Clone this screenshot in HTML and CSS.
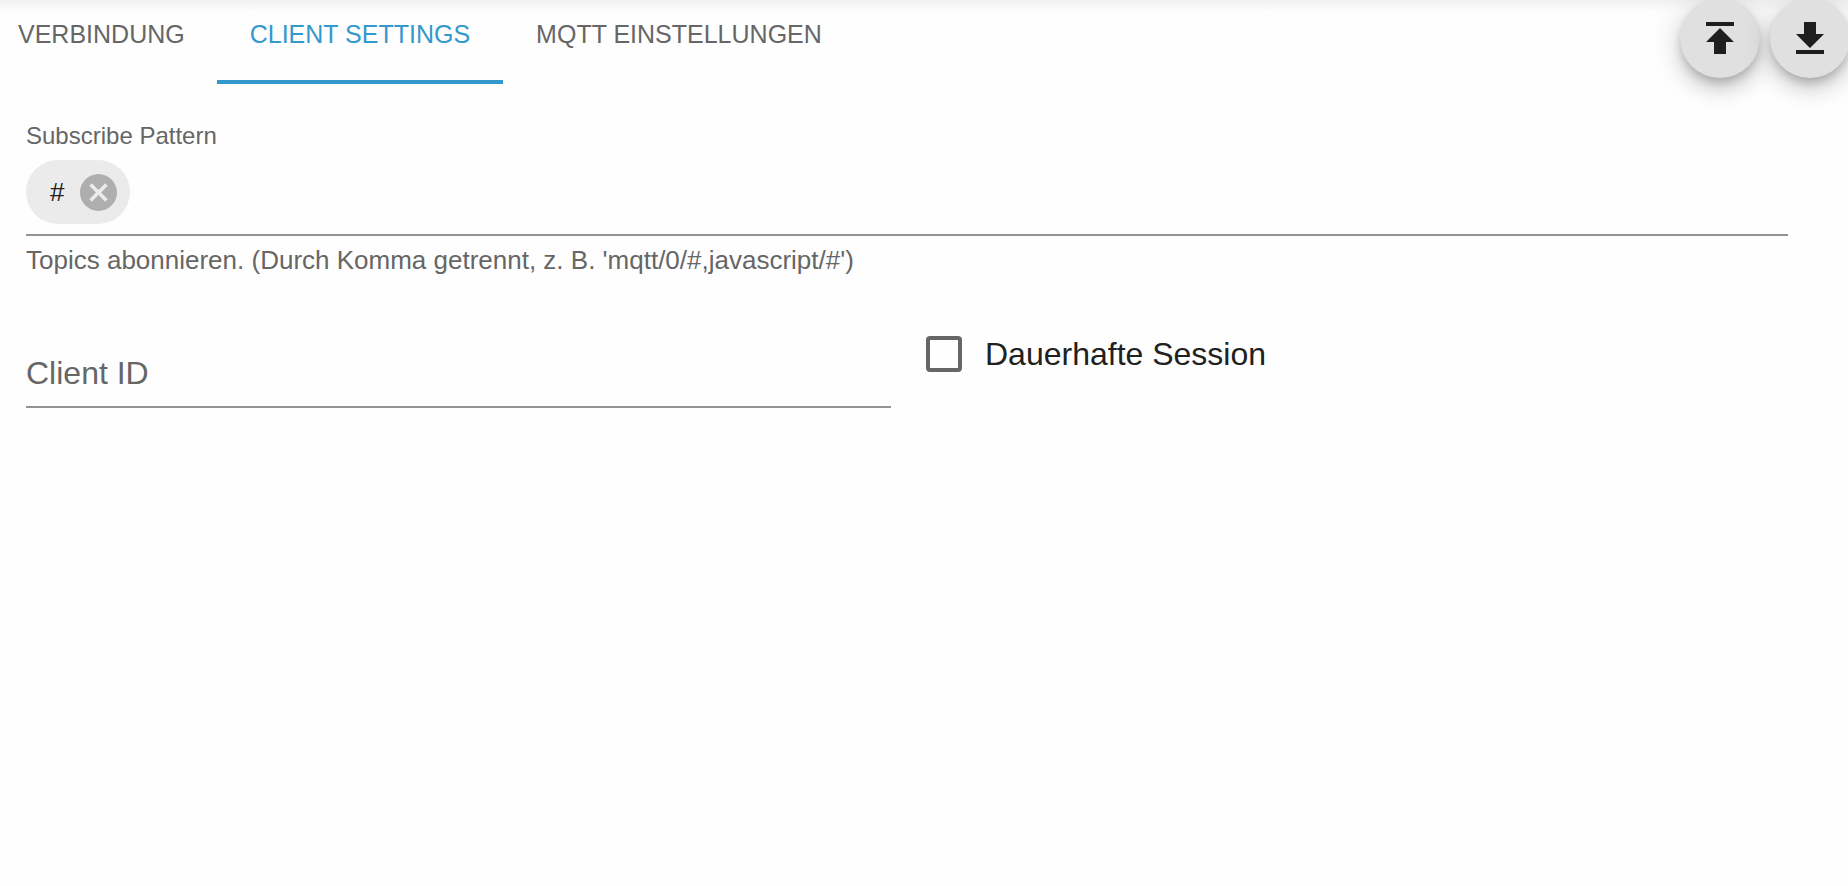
FILE: index.html
```html
<!DOCTYPE html>
<html lang="de">
<head>
    <meta charset="UTF-8">
    <meta name="viewport" content="width=device-width, initial-scale=1">
    <title>MQTT</title>
    <link rel="stylesheet" href="styles.css">
</head>
<body>

<header class="header">
    <div class="tabs" role="tablist">
        <button class="tab" type="button" role="tab" aria-selected="false">VERBINDUNG</button>
        <button class="tab active" type="button" role="tab" aria-selected="true">CLIENT SETTINGS</button>
        <button class="tab" type="button" role="tab" aria-selected="false">MQTT EINSTELLUNGEN</button>
    </div>
    <div class="actions">
        <button class="fab" type="button" aria-label="Import">
            <svg viewBox="0 0 24 24" width="48" height="48"><path d="M5 4v2h14V4H5zm0 10h4v6h6v-6h4l-7-7-7 7z"/></svg>
        </button>
        <button class="fab" type="button" aria-label="Export">
            <svg viewBox="0 0 24 24" width="48" height="48"><path d="M19 10h-4V4H9v6H5l7 7 7-7zM5 18v2h14v-2H5z"/></svg>
        </button>
    </div>
</header>

<main class="content">
    <!-- Subscribe Pattern -->
    <div class="field">
        <label class="field-label" for="pattern">Subscribe Pattern</label>
        <div class="chip-input">
            <span class="chip">
                #
                <button class="chip-delete" type="button" aria-label="# entfernen">
                    <svg viewBox="2 2 20 20" width="37" height="37"><path d="M12 2C6.47 2 2 6.47 2 12s4.47 10 10 10 10-4.47 10-10S17.53 2 12 2zm5 13.59L15.59 17 12 13.41 8.41 17 7 15.59 10.59 12 7 8.41 8.41 7 12 10.59 15.59 7 17 8.41 13.41 12 17 15.59z"/></svg>
                </button>
            </span>
            <input class="chip-text" type="text" id="pattern">
        </div>
        <p class="helper">Topics abonnieren. (Durch Komma getrennt, z. B. 'mqtt/0/#,javascript/#')</p>
    </div>

    <div class="row">
        <input class="text-input" type="text" id="client-id" placeholder="Client ID" aria-label="Client ID">
        <label class="check">
            <input class="check-box" type="checkbox">
            Dauerhafte Session
        </label>
    </div>
</main>

</body>
</html>
```

FILE: styles.css
```css
* {
    box-sizing: border-box;
}

body {
    margin: 0;
    background: #fefefe;
    color: #212121;
    font-family: "Liberation Sans", Arial, sans-serif;
    overflow-x: hidden;
}

button, input {
    font-family: inherit;
    margin: 0;
    padding: 0;
    border: none;
    background: none;
}

/* header */
.header {
    display: flex;
    justify-content: space-between;
    align-items: flex-start;
    height: 84px;
    background: linear-gradient(#f1f1f1, #fefefe 12px);
}

.tabs {
    display: flex;
    height: 84px;
}

.tab {
    padding: 0 33px 12px;
    border-bottom: 4px solid transparent;
    color: #666;
    font-size: 25px;
    cursor: pointer;
}

.tab:first-child {
    padding-left: 18px;
    padding-right: 32px;
}

.tab.active {
    color: #3399cc;
    border-color: #3399cc;
}

.actions {
    display: flex;
    gap: 10px;
    margin: -2px -2px 0 0;
}

.fab {
    display: flex;
    align-items: center;
    justify-content: center;
    width: 80px;
    height: 80px;
    border-radius: 50%;
    background: #e0e0e0;
    box-shadow: 0 6px 10px -2px rgba(0, 0, 0, 0.2), 0 12px 20px rgba(0, 0, 0, 0.14), 0 2px 36px rgba(0, 0, 0, 0.12);
    cursor: pointer;
}

.fab svg {
    fill: #1e1e1e;
}

/* form */
.content {
    padding: 38px 60px 0 26px;
}

.field-label {
    display: block;
    color: #666;
    font-size: 24px;
    line-height: 28px;
}

.chip-input {
    display: flex;
    align-items: center;
    padding: 10px 0;
    border-bottom: 2px solid #949494;
}

.chip {
    display: flex;
    align-items: center;
    gap: 16px;
    height: 64px;
    padding: 0 13px 0 24px;
    border-radius: 32px;
    background: #ebebeb;
    font-size: 26px;
}

.chip-delete {
    display: flex;
    cursor: pointer;
}

.chip-delete svg {
    fill: #aeaeae;
}

.chip-text {
    flex: 1;
    height: 40px;
    padding-left: 12px;
    font-size: 28px;
    outline: none;
}

.helper {
    margin: 8px 0 0;
    color: #666;
    font-size: 26px;
    line-height: 32px;
}

.row {
    display: grid;
    grid-template-columns: 1fr 1fr;
    align-items: start;
    gap: 32px;
    margin-top: 52px;
}

.text-input {
    height: 80px;
    padding-top: 12px;
    border-bottom: 2px solid #949494;
    color: #212121;
    font-size: 32px;
    outline: none;
}

.text-input::placeholder {
    color: #666;
    opacity: 1;
}

.check {
    display: flex;
    align-items: center;
    gap: 23px;
    height: 52px;
    padding-left: 3px;
    font-size: 32px;
    cursor: pointer;
}

.check-box {
    appearance: none;
    width: 36px;
    height: 36px;
    border: 4px solid #666;
    border-radius: 4px;
}

.check-box:checked {
    background: #3399cc;
    border-color: #3399cc;
}
```
